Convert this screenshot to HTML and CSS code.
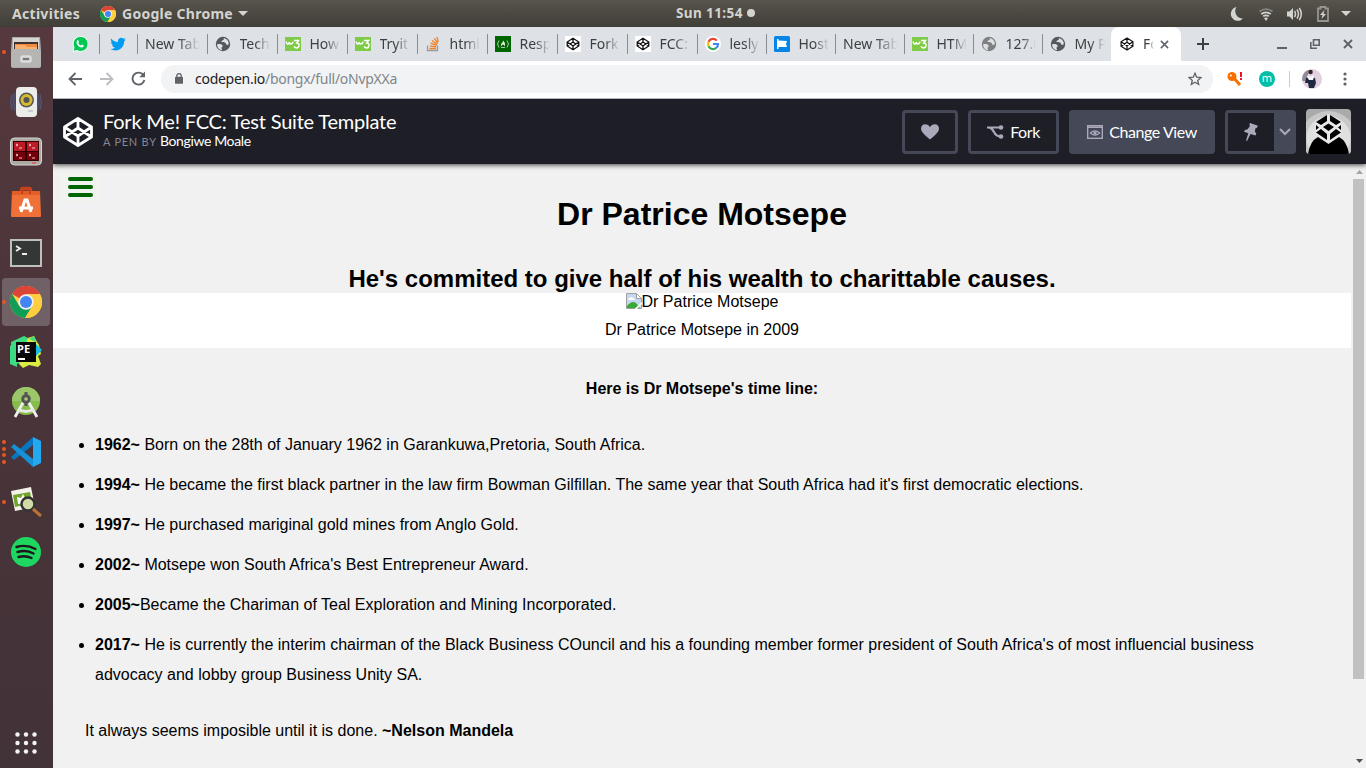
FILE: index.html
```html
<!DOCTYPE html>
<html lang="en">
<head>
<meta charset="utf-8">
<title>Fork Me! FCC: Test Suite Template</title>
<link rel="stylesheet" href="styles.css">
</head>
<body>
<svg class="defs" width="0" height="0">
  <defs>
    <symbol id="chrome" viewBox="0 0 32 32"><circle cx="16" cy="16" r="16" fill="#fc4"/><path d="M16 16 2.1 8A16 16 0 0 1 29.9 8Z" fill="#db4437"/><path d="M2.1 8A16 16 0 0 0 15 32L22.5 19.5 16 16 9 19.5Z" fill="#0f9d58"/><path d="M16 8H29.9A16 16 0 0 1 15 32L22.5 20Z" fill="#ffcd40"/><circle cx="16" cy="16" r="7.7" fill="#f1f1f1"/><circle cx="16" cy="16" r="6" fill="#4285f4"/></symbol>
    <symbol id="globe" viewBox="0 0 16 16"><circle cx="8" cy="8" r="7.2" fill="currentColor"/><path d="M2.2 8.2c2.5-.4 5.200 0 5.400 1.700.2 1.300-1.500 1-1.200 2.300.2.8.9.8.6 1.900-2.900-.3-5-2.800-4.800-5.900ZM8.300 2.200c1.300.6.6 1.600-.3 2-.9.5-1.700.6-1.500 1.600.3 1 2.400.2 3.700.9 1.100.6.700 2 1.800 2.200.8.200 1.500-.3 1.800-1.100.1-2.900-2.400-5.600-5.500-5.600Z" fill="#dee1e6"/></symbol>
    <symbol id="w3" viewBox="0 0 16 16"><path d="M0 1h16v14H0z" fill="#7fcb47"/><path d="M1.200 5.500q.4 3 2 2.500 1.100-.3 1-2 .2 2.200 1.700 2Q7.700 7.700 8 5.600M9 4.500h4.500L11.700 7q2.600.2 2.300 2.900-.5 2.200-2.700 2Q9.800 11.700 9 10.300" fill="none" stroke="#fff" stroke-width="1.500"/></symbol>
    <symbol id="pen" viewBox="0 0 32 32"><path d="M16 2.500 29.500 11v10L16 29.500 2.500 21V11ZM2.500 11 16 20l13.500-9M2.500 21 16 12l13.500 9M16 2.500V12M16 20v9.500" fill="none" stroke="currentColor" stroke-width="2.800" stroke-linejoin="round"/></symbol>
    <symbol id="penwhite" viewBox="0 0 16 16"><rect width="16" height="16" rx="1" fill="#fff"/><path d="M8 2.300 13.800 6v4L8 13.700 2.200 10V6ZM2.200 6 8 10 13.800 6M2.200 10 8 6l5.800 4M8 2.300V6M8 10v3.700" fill="none" stroke="#111" stroke-width="1.300"/></symbol>
  </defs>
</svg>

<div class="topbar">
  <span class="activities">Activities</span>
  <svg class="app-icon" width="16" height="16"><use href="#chrome"/></svg>
  <span class="app-name">Google Chrome</span>
  <svg class="app-caret" width="10" height="5"><path d="M0 0h10L5 5z" fill="#d3d3cf"/></svg>
  <div class="clock">Sun 11:54<i></i></div>
  <div class="tray">
    <svg width="14" height="16" viewBox="0 0 14 16"><path d="M6.500 1A7 7 0 1 0 13 12.600 7.500 7.500 0 0 1 6.500 1Z" fill="#d3d3cf"/></svg>
    <svg width="16" height="16" viewBox="0 0 16 16" fill="none" stroke="#d3d3cf" stroke-width="1.700"><path d="M1.500 5.500Q8 .8 14.500 5.500" stroke="#85837d"/><path d="M3.200 8Q8 4.600 12.800 8M5.200 10.300q2.800-1.900 5.600 0"/><path d="M6 12q2-1.200 4 0l-2 3z" fill="#d3d3cf" stroke="none"/></svg>
    <svg width="17" height="16" viewBox="0 0 17 16"><path d="M1 5.500h2.500L7 2v12l-3.500-3.500H1z" fill="#d3d3cf"/><path d="M8.500 5q2 3 0 6M11 3.500q3 4.500 0 9M13.300 2q4 6 0 12" fill="none" stroke="#d3d3cf" stroke-width="1.500"/></svg>
    <svg width="12" height="16" viewBox="0 0 12 16"><path d="M1 2.500h2.500V1h5v1.500H11V15H1z" fill="none" stroke="#96948e" stroke-width="1.800"/><path d="M7.500 4 3 9h2.500L4.500 13 9 8H6.500z" fill="#d3d3cf"/></svg>
    <svg width="10" height="5"><path d="M0 0h10L5 5z" fill="#d3d3cf"/></svg>
  </div>
</div>

<div class="desktop">
  <nav class="dock">
    <div class="slot"><div class="dots"><i></i></div><svg width="32" height="34" viewBox="0 0 32 34"><path d="M2 2h28l1 13v16q0 2-2 2H3q-2 0-2-2V15z" fill="#aaa"/><path d="M3 3h26v13H3z" fill="#d5d5d2"/><path d="M4 7h24v9H4z" fill="#3e332f"/><path d="M5 9h22v6H5z" fill="#f08a40"/><path d="M5 10h10l2 2h10v2H5z" fill="#f7b070"/><path d="M3 14h26l2 3v13q0 2-2 2H3q-2 0-2-2V17z" fill="#b5b5b3"/><rect x="11" y="21" width="10" height="6" rx="1" fill="#ccc" stroke="#eee"/><path d="M13 23h6v2h-6z" fill="#777"/></svg></div>
    <div class="slot"><svg width="34" height="34" viewBox="0 0 34 34"><ellipse cx="17" cy="17" rx="16" ry="12" fill="#4e4256"/><path d="M3 9q-3 8 0 16M6 8q-3 9 0 18M31 9q3 8 0 16M28 8q3 9 0 18" fill="none" stroke="#54587a"/><rect x="7" y="2" width="21" height="30" rx="4" fill="#ececea"/><circle cx="17.500" cy="15" r="7.500" fill="#555"/><circle cx="17.500" cy="15" r="6" fill="#d5bb30"/><circle cx="17.500" cy="15" r="3" fill="#555"/><path d="M19 26h5" stroke="#ccc" stroke-width="2"/></svg></div>
    <div class="slot"><svg width="34" height="30" viewBox="0 0 34 30"><rect x="1.500" y="1" width="31" height="27" rx="4" fill="#aaa9a2" stroke="#d7d6d0"/><path d="M4 4h26v20H4z" fill="#300"/><path d="M5 5h11v9H5zM18 5h11v9H18z" fill="#bd1a25"/><path d="M5 15h11v8H5zM18 15h11v8H18z" fill="#760009"/><path d="m7 7 2 1-2 1m3 2h3m7-4 2 1-2 1m3 2h3M7 17l2 1-2 1m3 2h3m7-4 2 1-2 1m3 2h3" fill="none" stroke="#f6dede" stroke-width=".9"/><path d="M23 26h4" stroke="#e33"/></svg></div>
    <div class="slot"><svg width="32" height="32" viewBox="0 0 32 32"><path d="M11 8V4q0-2 2-2h6q2 0 2 2v4" fill="none" stroke="#c5431c" stroke-width="2.500"/><path d="M2 5h28l1 25q0 1-1 1H2q-1 0-1-1z" fill="#ef7138"/><path d="M2 5h28v4H2z" fill="#e45d27"/><path d="M12 8V3.500h8V8" fill="none" stroke="#c5431c" stroke-width="2"/><path d="M11 26 15 14h2l4 12M9 22h14" fill="none" stroke="#fff" stroke-width="3"/></svg></div>
    <div class="slot term"><svg width="32" height="28" viewBox="0 0 32 28"><rect x="1" y="1" width="30" height="26" fill="#333836" stroke="#bfc0bb" stroke-width="2"/><path d="m6 7 4 2.500-4 2.500m6 3h5" fill="none" stroke="#eee" stroke-width="1.800"/></svg></div>
    <div class="slot current"><div class="dots"><i></i></div><svg width="32" height="32"><use href="#chrome"/></svg></div>
    <div class="slot"><svg width="32" height="32" viewBox="0 0 32 32"><path d="M1 6 14 0l12 6 2 20L2 28z" fill="#3ddb82"/><path d="m18 2 6-2 3 6 2 3 2 9-3 2 3 8-3 3-9-2-6 3-4-4z" fill="#d9ed42"/><path d="m19 3 5-3 2 6z" fill="#3ddb82"/><path d="m26 8 6 6-6 6z" fill="#12bde8"/><path d="M0 10 7 6v25l-7-3z" fill="#3ddb82"/><rect x="6" y="6" width="20" height="20" fill="#080808"/><text x="7" y="16.500" class="pe">PE</text><path d="M8 22h7v2H8z" fill="#fff"/></svg></div>
    <div class="slot"><svg width="32" height="32" viewBox="0 0 32 32"><circle cx="16" cy="15" r="14" fill="#86bd4a"/><path d="M2 15a14 14 0 0 1 28 0" fill="#9bc76a"/><path d="m14 15-9 16M18 15l9 16" stroke="#eee" stroke-width="2.800"/><path d="M8 23q8 5 16 0" fill="none" stroke="#e8e8e8" stroke-width="3"/><circle cx="16" cy="13" r="3.300" fill="#a5ce77" stroke="#555" stroke-width="3"/><path d="M16 6v4M16 17v3" stroke="#555" stroke-width="3"/></svg></div>
    <div class="slot"><div class="dots"><i></i><i></i><i></i><i></i></div><svg width="32" height="32" viewBox="0 0 32 32"><path d="M23 1 31 5v22l-8 4z" fill="#24a8ef"/><path d="m1 21 3 3L23 9V1z" fill="#0877c0"/><path d="m1 11 3-3 19 15v8z" fill="#1690d8"/></svg></div>
    <div class="slot"><div class="dots"><i></i></div><svg width="34" height="32" viewBox="0 0 34 32"><path d="m2 5 20-4 4 20-20 4z" fill="#f2f1ea"/><path d="m4 9 17-3 2 11-17 4z" fill="#70a52c"/><path d="m8 11 4 1 2-4 2 4 4-1-3 4 2 2-10 1z" fill="#fff"/><circle cx="19" cy="18" r="6.500" fill="#d0dba8" stroke="#333" stroke-width="2.500"/><path d="m24 23 8 7" stroke="#bb7235" stroke-width="3"/></svg></div>
    <div class="slot"><svg width="30" height="30" viewBox="0 0 30 30"><circle cx="15" cy="15" r="15" fill="#1ed760"/><path d="M5.500 10q10-3 19 2M6.500 15q9-2.600 16 1.500M7.500 20q7-2 13 1" fill="none" stroke="#1b171a" stroke-width="2.400" stroke-linecap="round"/></svg></div>
    <svg class="apps" width="22" height="22" viewBox="0 0 22 22" fill="#f4f4f4"><circle cx="2.500" cy="2.500" r="2.200"/><circle cx="11" cy="2.500" r="2.200"/><circle cx="19.500" cy="2.500" r="2.200"/><circle cx="2.500" cy="11" r="2.200"/><circle cx="11" cy="11" r="2.200"/><circle cx="19.500" cy="11" r="2.200"/><circle cx="2.500" cy="19.500" r="2.200"/><circle cx="11" cy="19.500" r="2.200"/><circle cx="19.500" cy="19.500" r="2.200"/></svg>
  </nav>

  <div class="browser">
    <div class="tabs">
      <div class="tab first"><svg viewBox="0 0 16 16"><path d="M1 15.500 2 11.500A7.500 7.500 0 1 1 5 14.500Z" fill="#00c853" stroke="#fff"/><path d="M5 4.500q1-1 1.500.2L7 6l-.7 1Q7 9 9 9.500l1-1 1.800 1q0 2-2.200 1.900Q5.500 11 4.500 6.800z" fill="#fff"/></svg></div>
      <div class="tab second"><svg viewBox="0 0 16 16"><path d="M1 2.500Q4 6 8 6q-.5-3 2-4 2-.8 3.300.7l2-.6-1 1.700 1.500-.3-1.600 1.700Q14 11 9.500 13.500 4.500 15.500.5 13q3 0 4.500-1.500-2.500-.3-3-2.300h1.200Q1 8 1 5.500l1.200.5Q0 4.500 1 2.500Z" fill="#009cf4"/></svg></div>
      <div class="tab"><span class="wide">New Tab</span></div>
      <div class="tab"><svg class="g1"><use href="#globe"/></svg><span>Tech</span></div>
      <div class="tab"><svg><use href="#w3"/></svg><span>How</span></div>
      <div class="tab"><svg><use href="#w3"/></svg><span>Tryit</span></div>
      <div class="tab"><svg viewBox="0 0 16 16"><path d="M2.500 9.500v5h10v-5" fill="none" stroke="#9a9a9a" stroke-width="1.300"/><path d="M4.500 12.500h6.500M4.800 9.900l6.300 1M5.500 7.200l6 2.200M7 4.500l5 4M9.300 2.300l3.500 5M12 1l1.200 5" stroke="#f48024" stroke-width="1.300"/></svg><span>html</span></div>
      <div class="tab"><svg viewBox="0 0 16 16"><path d="M0 0h16v16H0z" fill="#006400"/><path d="M4 4.500q-3 3.500 0 7M12 4.500q3 3.500 0 7M6 11.500h4" fill="none" stroke="#b8d5b8" stroke-width=".9"/><path d="M8 4.500q2.600 2.500 2 4.500l-1 1.500Q9.500 8.500 8 8.500T7 10.500Q5 9 6.500 7.500 8 6.500 8 4.500" fill="#e6f1e6"/></svg><span>Resp</span></div>
      <div class="tab"><svg><use href="#penwhite"/></svg><span>Fork</span></div>
      <div class="tab"><svg><use href="#penwhite"/></svg><span>FCC:</span></div>
      <div class="tab n"><svg viewBox="0 0 16 16"><circle cx="8" cy="8" r="8" fill="#fff"/><g fill="none" stroke-width="2.200"><path d="M11.800 4.600A5 5 0 0 0 3.500 5.700" stroke="#ea4335"/><path d="M3.500 5.700a5 5 0 0 0 0 4.600" stroke="#fbbc05"/><path d="M3.500 10.300a5 5 0 0 0 7.800 1.500" stroke="#34a853"/><path d="M11.300 11.800Q13 10.500 13 8H8" stroke="#4285f4"/></g></svg><span>lesly</span></div>
      <div class="tab n"><svg viewBox="0 0 16 16"><rect width="16" height="16" rx="1.500" fill="#0784e8"/><path d="M3 3h1.500v1.500L13 5l-1 3 1 3H4.500v2H3z" fill="#fff"/></svg><span>Host</span></div>
      <div class="tab n"><span class="wide">New Tab</span></div>
      <div class="tab n"><svg><use href="#w3"/></svg><span>HTM</span></div>
      <div class="tab n"><svg class="g2"><use href="#globe"/></svg><span>127.0</span></div>
      <div class="tab n last"><svg class="g1"><use href="#globe"/></svg><span>My P</span></div>
      <div class="tab active"><svg class="penfav"><use href="#pen"/></svg><span>Fo</span><svg class="close" viewBox="0 0 10 10"><path d="m1 1 8 8M9 1 1 9" stroke="#5f6368" stroke-width="1.700"/></svg></div>
      <svg class="plus" viewBox="0 0 12 12"><path d="M6 0v12M0 6h12" stroke="#3c4043" stroke-width="2"/></svg>
      <div class="winctl">
        <svg width="10" height="12"><path d="M0 10h10" stroke="#5f6368" stroke-width="2"/></svg>
        <svg width="10" height="10" viewBox="0 0 10 10" fill="none" stroke="#5f6368" stroke-width="1.600"><path d="M3.500.8h5.700v5.400H3.500zM.8 3v6.200H7"/></svg>
        <svg width="10" height="10" viewBox="0 0 10 10"><path d="m1 1 8 8M9 1 1 9" stroke="#5f6368" stroke-width="1.900"/></svg>
      </div>
    </div>

    <div class="toolbar">
      <svg width="14" height="14" viewBox="0 0 14 14"><path d="M14 7H1.500M7.500 1l-6 6 6 6" fill="none" stroke="#5f6368" stroke-width="1.800"/></svg>
      <svg width="14" height="14" viewBox="0 0 14 14"><path d="M0 7h12.500M6.500 1l6 6-6 6" fill="none" stroke="#bbbdc0" stroke-width="1.800"/></svg>
      <svg width="15" height="15" viewBox="0 0 15 15"><path d="M12.500 4.200A6 6 0 1 0 13.400 9" fill="none" stroke="#5f6368" stroke-width="1.900"/><path d="M14 .5v5.700H8.300z" fill="#5f6368"/></svg>
      <div class="omni">
        <svg width="8" height="11" viewBox="0 0 9 12"><path d="M2 5V3a2.500 2.500 0 0 1 5 0v2" fill="none" stroke="#5f6368" stroke-width="1.400"/><rect y="4" width="9" height="8" rx="1" fill="#5f6368"/></svg>
        <span class="url"><b>codepen.io</b>/bongx/full/oNvpXXa</span>
        <svg class="star" width="14" height="14" viewBox="0 0 14 14"><path d="m7 1.300 1.700 3.900 4.200.4-3.200 2.800 1 4.100L7 10.300l-3.700 2.200 1-4.100L1.100 5.600l4.200-.4z" fill="none" stroke="#5f6368" stroke-width="1.300"/></svg>
      </div>
      <svg class="key" width="16" height="16" viewBox="0 0 16 16"><circle cx="5" cy="5.500" r="4.500" fill="#f97000"/><path d="m6 6 7 8" stroke="#f97000" stroke-width="3"/><circle cx="3.800" cy="4.500" r="1" fill="#fff"/><path d="M14 1v5M14 7v2" stroke="#e12" stroke-width="2"/></svg>
      <div class="m">m</div>
      <div class="rule"></div>
      <svg class="user" width="20" height="20" viewBox="0 0 20 20"><defs><clipPath id="round"><circle cx="10" cy="10" r="10"/></clipPath></defs><g clip-path="url(#round)"><path d="M0 0h20v20H0z" fill="#e3d0de"/><path d="M0 0h6v12H0z" fill="#948a97"/><path d="M4 9q4-2 9 0l1 5-2 5H7L6 14H3z" fill="#202940"/><circle cx="8.500" cy="3" r="2.300" fill="#2c2430"/><path d="m6 6 2.500 2L11 6l1 2-1 3H7L5 8z" fill="#f6f6fb"/></g></svg>
      <svg class="menu" width="4" height="14" viewBox="0 0 4 14" fill="#5f6368"><circle cx="2" cy="2" r="1.600"/><circle cx="2" cy="7" r="1.600"/><circle cx="2" cy="12" r="1.600"/></svg>
    </div>

    <header class="penbar">
      <svg class="logo" width="32" height="32"><use href="#pen"/></svg>
      <div class="title"><h1>Fork Me! FCC: Test Suite Template</h1><p><span>A PEN BY</span> Bongiwe Moale</p></div>
      <div class="actions">
        <div class="btn heart"><svg width="18" height="16" viewBox="0 0 18 16"><path d="M9 15.500Q0 8.500 0 5 0 .5 4.500.3 7.500.3 9 3 10.500.3 13.500.3 18 .5 18 5 18 8.500 9 15.500Z" fill="#a9a9bb"/></svg></div>
        <div class="btn fork"><svg width="17" height="14" viewBox="0 0 17 14"><path d="M0 2.500h14M2 2.500q3 .5 5 4.500t6 4.500" fill="none" stroke="#a9a9bb" stroke-width="2.200"/><circle cx="14" cy="2.500" r="2.300" fill="#a9a9bb"/><circle cx="14" cy="11.500" r="2.300" fill="#a9a9bb"/></svg>Fork</div>
        <div class="btn view"><svg width="16" height="14" viewBox="0 0 16 14"><rect x=".7" y=".7" width="14.600" height="12.600" fill="none" stroke="#a9a9bb" stroke-width="1.400"/><path d="M1 2.200h14" stroke="#a9a9bb" stroke-width="1.600"/><path d="M3.300 8q4.700-4.400 9.400 0-4.700 4.400-9.400 0Z" fill="none" stroke="#a9a9bb" stroke-width="1.100"/><circle cx="8" cy="8" r="1.700" fill="#a9a9bb"/></svg>Change View</div>
        <div class="btn pin"><div><svg width="14" height="18" viewBox="0 0 14 18"><path d="M6 0 14 2.800 12.700 5 11.500 5.200 10.800 8.500 12.300 10.500 11.500 12.500 6.500 11 3 18 2 17.600 4.300 10.300 0 8.700 1 7 3.600 6.200 6 2.900 5.300 1.500Z" fill="#a9a9bb"/></svg></div><svg width="12" height="8" viewBox="0 0 12 8"><path d="m1 1 5 5 5-5" fill="none" stroke="#a9a9bb" stroke-width="2"/></svg></div>
        <svg class="avatar" width="45" height="45" viewBox="0 0 45 45"><path d="M0 0h45v45H0z" fill="#aaa"/><circle cx="22.500" cy="30" r="28" fill="#c8c8c8"/><circle cx="22.500" cy="29" r="22" fill="#e0e0e0"/><path d="M2 45q2-13 10-17l10.500 7L33 28q8 4 10 17Z" fill="#000"/><path d="m22.500 5 13 8v12l-13 9-13-9V13z" fill="#e8e8e8"/><path d="m21 6-11 7 5 3 6-4zm3 0 11 7-5 3-6-4zM10 16v5l3-2.500zm25 0v5l-3-2.500zM22.500 14.500 28 18l-5.500 4-5.500-4zM15 20l-5 3.500L21 31v-6zm15 0 5 3.500L24 31v-6z" fill="#000"/></svg>
      </div>
    </header>

    <div class="viewport">
      <main>
        <div class="burger"><i></i><i></i><i></i></div>
        <h2>Dr Patrice Motsepe</h2>
        <h3>He's commited to give half of his wealth to charittable causes.</h3>
        <figure>
          <div class="broken"><svg width="16" height="16" viewBox="0 0 16 16"><path d="M.5.500h10l5 5v10H.5z" fill="#c5d7f3" stroke="#a0a0a0"/><path d="M2 7q0-2 2-2 1-2 3 0 2 0 2 2z" fill="#fff"/><path d="M1 15v-2q5-6 9-3l4 5z" fill="#3ba936"/><path d="M10.500.500v5h5z" fill="#fff" stroke="#a0a0a0"/><path d="m8.500 16 7.500-7v2l-5 5z" fill="#fff"/></svg>Dr Patrice Motsepe</div>
          <figcaption>Dr Patrice Motsepe in 2009</figcaption>
        </figure>
        <h4>Here is Dr Motsepe's time line:</h4>
        <ul>
          <li><b>1962~</b> Born on the 28th of January 1962 in Garankuwa,Pretoria, South Africa.</li>
          <li><b>1994~</b> He became the first black partner in the law firm Bowman Gilfillan. The same year that South Africa had it's first democratic elections.</li>
          <li><b>1997~</b> He purchased mariginal gold mines from Anglo Gold.</li>
          <li><b>2002~</b> Motsepe won South Africa's Best Entrepreneur Award.</li>
          <li><b>2005~</b>Became the Chariman of Teal Exploration and Mining Incorporated.</li>
          <li><b>2017~</b> He is currently the interim chairman of the Black Business COuncil and his a founding member former president of South Africa's of most influencial business advocacy and lobby group Business Unity SA.</li>
        </ul>
        <p class="quote">It always seems imposible until it is done. <b>~Nelson Mandela</b></p>
      </main>
      <div class="scroll">
        <svg width="7" height="4"><path d="M0 4h7L3.500 0z" fill="#a3a3a3"/></svg>
        <div class="thumb"></div>
        <svg class="down" width="7" height="4"><path d="M0 0h7L3.500 4z" fill="#505050"/></svg>
      </div>
    </div>
  </div>
</div>
</body>
</html>
```
FILE: styles.css
```css
* { box-sizing: border-box; }
body { margin: 0; width: 1366px; height: 768px; overflow: hidden; display: flex; flex-direction: column; font-family: "Liberation Sans", sans-serif; }
svg { display: block; flex: none; }
.defs { position: absolute; }
h1, h2, h3, h4, p, ul, figure { margin: 0; padding: 0; }

.topbar { height: 27px; flex: none; display: flex; align-items: center; padding-left: 12px; background: linear-gradient(#58544c, #403e38); color: #d3d3cf; font: bold 14px "Noto Sans", sans-serif; white-space: nowrap; }
.activities { width: 88px; letter-spacing: .3px; }
.app-name { width: 112px; margin-left: 6px; letter-spacing: .27px; }
.app-caret { margin-left: 4px; }
.clock { margin-left: 428px; margin-top: -1px; width: 80px; display: flex; align-items: center; font-size: 13.5px; letter-spacing: .4px; }
.clock i { width: 8px; height: 8px; border-radius: 50%; background: #d3d3cf; margin-left: 4px; }
.tray { margin-left: auto; padding-right: 15px; display: flex; align-items: center; gap: 14px; }
.tray svg:nth-child(3) { margin-left: -2px; }
.tray svg:nth-child(5) { margin-left: -2px; }

.desktop { flex: 1; display: flex; min-height: 0; }
.dock { width: 53px; flex: none; display: flex; flex-direction: column; padding-bottom: 14px; background: linear-gradient(#55393e, #493439 50%, #423338); }
.slot { position: relative; height: 50px; flex: none; width: 48px; margin-left: 2px; display: flex; align-items: center; justify-content: center; border-radius: 4px; }
.term { padding-top: 2px; }
.current { background: #706167; height: 48px; margin-top: 1px; margin-bottom: 1px; }
.dots { position: absolute; left: 0; top: 0; bottom: 0; display: flex; flex-direction: column; justify-content: center; gap: 2.500px; }
.dots i { width: 4px; height: 4px; border-radius: 50%; background: #e95420; }
.pe { font: bold 11px "Open Sans", sans-serif; fill: #fff; }
.apps { margin: auto auto 0 15px; }

.browser { flex: 1; min-width: 0; display: flex; flex-direction: column; }
.tabs { height: 34px; flex: none; display: flex; align-items: center; padding-left: 8px; background: #dee1e6; color: #3c4043; font: 14px "Noto Sans", sans-serif; }
.tab { width: 70px; flex: none; height: 20px; display: flex; align-items: center; padding-left: 7px; border-right: 1px solid #898c91; }
.tab svg { width: 16px; height: 16px; }
.tab span { width: 30px; margin-left: 8.500px; overflow: hidden; white-space: nowrap; line-height: 20px; mask-image: linear-gradient(90deg, #000 50%, transparent); }
.tab .wide { margin-left: 0; width: 55px; mask-image: linear-gradient(90deg, #000 60%, transparent); }
.first { width: 39px; padding-left: 10.500px; }
.second { width: 38px; padding-left: 10px; }
.n { width: 69px; }
.last { width: 68px; border-right-color: transparent; }
.g1 { color: #55585c; }
.g2 { color: #808080; }
.tab.active { height: 34px; width: 70px; background: #fff; border: 0; border-radius: 8px 8px 0 0; padding-left: 9px; }
.tab.active .penfav { width: 14px; height: 14px; color: #111; }
.tab.active span { width: 11px; margin-left: 9px; }
.tab.active .close { width: 9px; height: 9px; margin-left: 6px; }
.plus { width: 12px; height: 12px; margin-left: 16px; }
.winctl { margin-left: auto; padding-right: 13px; display: flex; align-items: center; gap: 23px; }

.toolbar { height: 38px; flex: none; display: flex; align-items: center; padding: 0 19px 2px 15px; background: #fff; border-bottom: 1px solid #b6b4bb; }
.toolbar > svg:nth-child(2) { margin-left: 18px; }
.toolbar > svg:nth-child(3) { margin-left: 17px; }
.omni { width: 1052px; height: 28px; margin-left: 15px; border-radius: 14px; background: #f1f3f4; display: flex; align-items: center; padding: 0 11px 0 14px; }
.url { margin-left: 12px; color: #80868b; font: 14px/20px "Noto Sans", sans-serif; letter-spacing: -.27px; }
.url b { color: #202124; font-weight: normal; }
.star { margin-left: auto; }
.key { margin-left: 14px; }
.m { width: 16px; height: 16px; border-radius: 50%; margin-left: 16px; background: #00bfa5; color: #fff; font: 11px/14px "Noto Sans", sans-serif; text-align: center; }
.rule { width: 1px; height: 16px; margin-left: 14px; background: #ccc; }
.user { margin-left: 12px; }
.menu { margin-left: auto; }

.penbar { position: relative; height: 65px; flex: none; padding: 0 15px 0 9px; display: flex; align-items: center; background: #1e1f26; box-shadow: 0 1px 5px rgba(0,0,0,.75); clip-path: inset(0 0 -8px 0); color: #fff; font-family: Lato, sans-serif; }
.title { margin-left: 9px; padding-bottom: 2px; }
.title h1 { font-size: 20px; line-height: 22px; font-weight: normal; white-space: nowrap; letter-spacing: -.21px; }
.title p { font-size: 14px; line-height: 18px; letter-spacing: -.38px; white-space: nowrap; }
.title span { font-size: 11px; letter-spacing: .75px; color: #868699; }
.actions { margin-left: auto; display: flex; gap: 10px; align-items: center; }
.btn { height: 44px; border: 3px solid #444857; border-radius: 4px; display: flex; align-items: center; justify-content: center; font-size: 16px; letter-spacing: -.42px; white-space: nowrap; }
.heart { width: 56px; }
.fork { width: 91px; gap: 6px; }
.view { width: 146px; gap: 6px; background: #444857; }
.pin { width: 71px; background: #444857; justify-content: flex-start; gap: 5px; }
.pin div { width: 46px; height: 38px; background: #1e1f26; display: flex; align-items: center; justify-content: center; }
.avatar { border-radius: 4px; }

.viewport { flex: 1; min-height: 0; display: flex; background: #f1f1f1; color: #000; }
main { position: relative; width: 1298px; flex: none; padding-top: 32px; text-align: center; font-size: 16px; }
.burger { position: absolute; left: 8px; top: 8px; width: 39px; height: 30px; padding: 5px 7px; display: flex; flex-direction: column; gap: 4px; background: #f1f3ee; }
.burger i { width: 25px; height: 4px; border-radius: 2px; background: #006400; }
main h2 { font-size: 32px; line-height: 36px; }
main h3 { margin-top: 33px; font-size: 24px; line-height: 28px; }
figure { height: 55px; background: #fff; }
.broken { display: flex; justify-content: center; height: 18px; line-height: 18px; }
figcaption { margin-top: 4px; line-height: 30px; }
main h4 { margin-top: 26px; line-height: 30px; font-size: 16px; }
ul { margin: 26px 60px 0 42px; text-align: left; }
li { line-height: 30px; margin-bottom: 10px; }
.quote { margin: 26px 0 0 32px; line-height: 30px; text-align: left; }
.scroll { flex: 1; display: flex; flex-direction: column; align-items: center; padding: 6px 2px 5px; }
.scroll svg { margin-left: 1px; }
.thumb { width: 11px; height: 500px; margin-top: 5px; background: #c1c1c1; }
.scroll .down { margin-top: auto; }
```
